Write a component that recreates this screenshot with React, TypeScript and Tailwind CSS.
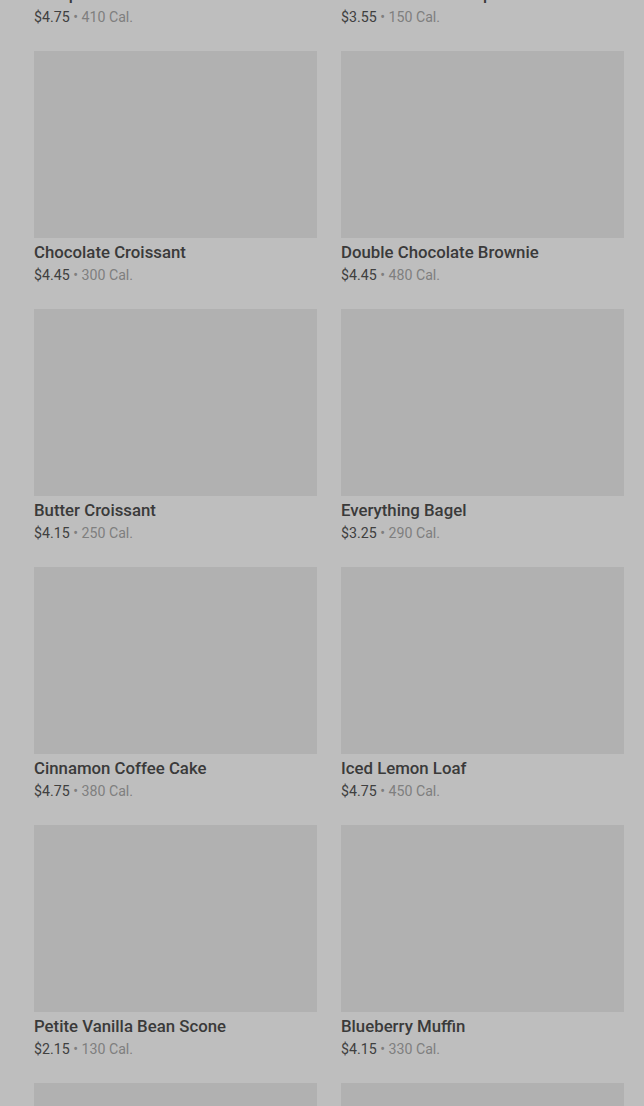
const items = [
  { name: 'Pumpkin Cream Cheese Loaf', price: '$4.75', cal: '410 Cal.' },
  { name: 'Chocolate Cake Pop', price: '$3.55', cal: '150 Cal.' },
  { name: 'Chocolate Croissant', price: '$4.45', cal: '300 Cal.' },
  { name: 'Double Chocolate Brownie', price: '$4.45', cal: '480 Cal.' },
  { name: 'Butter Croissant', price: '$4.15', cal: '250 Cal.' },
  { name: 'Everything Bagel', price: '$3.25', cal: '290 Cal.' },
  { name: 'Cinnamon Coffee Cake', price: '$4.75', cal: '380 Cal.' },
  { name: 'Iced Lemon Loaf', price: '$4.75', cal: '450 Cal.' },
  { name: 'Petite Vanilla Bean Scone', price: '$2.15', cal: '130 Cal.' },
  { name: 'Blueberry Muffin', price: '$4.15', cal: '330 Cal.' },
  { name: 'Banana Nut Bread', price: '$3.95', cal: '420 Cal.' },
  { name: 'Plain Bagel', price: '$2.95', cal: '280 Cal.' },
];

function ProductCard({ name, price, cal }: { name: string; price: string; cal: string }) {
  return (
    <div className="flex flex-col">
      <div className="h-[187px] bg-[#b1b1b1]" />
      <div className="mt-1 text-[16.8px] leading-5 font-medium text-[#3a3a3a] whitespace-nowrap">{name}</div>
      <div className="mt-[3px] text-[14.2px] leading-5 text-[#404040]">
        {price}
        <span className="text-[#7f7f7f]"> • {cal}</span>
      </div>
    </div>
  );
}

export default function App() {
  return (
    <div
      className="h-[1106px] overflow-hidden bg-[#bebebe]"
      style={{ fontFamily: 'Roboto, "Noto Sans", sans-serif' }}
    >
      <div className="-mt-[207px] grid grid-cols-2 gap-x-6 gap-y-6 pl-[34px] pr-[20px]">
        {items.map((item) => (
          <ProductCard key={item.name} {...item} />
        ))}
      </div>
    </div>
  );
}
